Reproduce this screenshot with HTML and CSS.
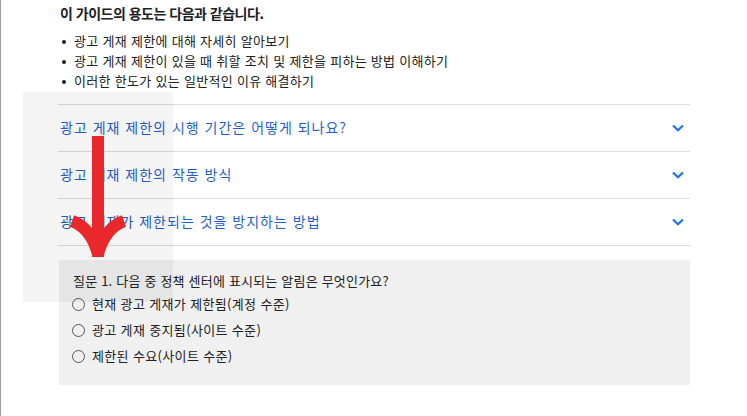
FILE: index.html
```html
<!DOCTYPE html>
<html lang="ko">
<head>
<meta charset="utf-8">
<title>광고 게재 제한</title>
<link rel="stylesheet" href="styles.css">
</head>
<body>
<div class="page">
  <main class="content">
    <h3 class="heading">이 가이드의 용도는 다음과 같습니다.</h3>
    <ul class="bullets">
      <li>광고 게재 제한에 대해 자세히 알아보기</li>
      <li>광고 게재 제한이 있을 때 취할 조치 및 제한을 피하는 방법 이해하기</li>
      <li>이러한 한도가 있는 일반적인 이유 해결하기</li>
    </ul>
    <div class="accordion">
      <div class="acc-item">
        <span class="acc-title">광고 게재 제한의 시행 기간은 어떻게 되나요?</span>
        <svg class="chev" width="12" height="8" viewBox="0 0 12 8"><path d="M1 1.5 L6 6.3 L11 1.5" fill="none" stroke="#1a73e8" stroke-width="2.2"/></svg>
      </div>
      <div class="acc-item">
        <span class="acc-title">광고 게재 제한의 작동 방식</span>
        <svg class="chev" width="12" height="8" viewBox="0 0 12 8"><path d="M1 1.5 L6 6.3 L11 1.5" fill="none" stroke="#1a73e8" stroke-width="2.2"/></svg>
      </div>
      <div class="acc-item">
        <span class="acc-title">광고 게재가 제한되는 것을 방지하는 방법</span>
        <svg class="chev" width="12" height="8" viewBox="0 0 12 8"><path d="M1 1.5 L6 6.3 L11 1.5" fill="none" stroke="#1a73e8" stroke-width="2.2"/></svg>
      </div>
    </div>
    <section class="quiz">
      <p class="question">질문 1. 다음 중 정책 센터에 표시되는 알림은 무엇인가요?</p>
      <label class="option"><span class="radio"></span>현재 광고 게재가 제한됨(계정 수준)</label>
      <label class="option"><span class="radio"></span>광고 게재 중지됨(사이트 수준)</label>
      <label class="option"><span class="radio"></span>제한된 수요(사이트 수준)</label>
    </section>
  </main>
  <div class="shade"></div>
  <svg class="arrow" width="80" height="130" viewBox="60 132 80 130">
    <path d="M98 136 L98 257" fill="none" stroke="#e8282a" stroke-width="12"/>
    <path d="M72 221 Q91 228 98 254" fill="none" stroke="#e8282a" stroke-width="12"/>
    <path d="M124 221 Q105 228 98 254" fill="none" stroke="#e8282a" stroke-width="12"/>
  </svg>
</div>
</body>
</html>
```

FILE: styles.css
```css
html, body {
  margin: 0;
  padding: 0;
  background: #ffffff;
}
body {
  font-family: "Noto Sans CJK KR", "Noto Sans", "Liberation Sans", sans-serif;
  color: #202124;
  height: 416px;
  overflow: hidden;
}
.page {
  position: relative;
  height: 416px;
  border-left: 1px solid #9c9c9c;
}
.content {
  margin-left: 57px;
  width: 632px;
}
.heading {
  margin: 0;
  padding: 3px 0 0 2px;
  font-size: 14px;
  font-weight: 700;
  line-height: 20px;
  letter-spacing: -0.5px;
}
.bullets {
  list-style: none;
  margin: 8px 0 0 0;
  padding: 0 0 0 16px;
  font-size: 13px;
  line-height: 20px;
  letter-spacing: 0.3px;
  color: #202124;
}
.bullets li {
  position: relative;
}
.bullets li::before {
  content: "";
  position: absolute;
  left: -12px;
  top: 9px;
  width: 4px;
  height: 4px;
  border-radius: 50%;
  background: #202124;
}
.accordion {
  margin-top: 13px;
  border-bottom: 1px solid #dcdcdc;
}
.acc-item {
  display: flex;
  align-items: center;
  justify-content: space-between;
  box-sizing: border-box;
  height: 47px;
  border-top: 1px solid #dcdcdc;
  padding: 0 6px 2px 2px;
}
.acc-title {
  font-size: 14px;
  color: #1f5fd1;
  line-height: 20px;
  letter-spacing: 1px;
}
.chev {
  display: block;
  margin-top: 2px;
}
.quiz {
  margin-top: 14px;
  margin-left: 1px;
  background: #f0f0f0;
  padding: 11px 14px 16px 13px;
  font-size: 13px;
  line-height: 20px;
  color: #202124;
}
.question {
  margin: 0;
  padding-left: 1px;
  letter-spacing: 0.2px;
}
.option {
  display: flex;
  align-items: center;
  gap: 7px;
  height: 26px;
  letter-spacing: 0.35px;
}
.radio {
  box-sizing: border-box;
  width: 13px;
  height: 13px;
  border: 1.5px solid #555555;
  border-radius: 50%;
  background: transparent;
  flex: none;
}
.shade {
  position: absolute;
  left: 22px;
  top: 92px;
  width: 150px;
  height: 210px;
  background: rgba(0, 0, 0, 0.045);
}
.arrow {
  position: absolute;
  left: 59px;
  top: 132px;
}
```
